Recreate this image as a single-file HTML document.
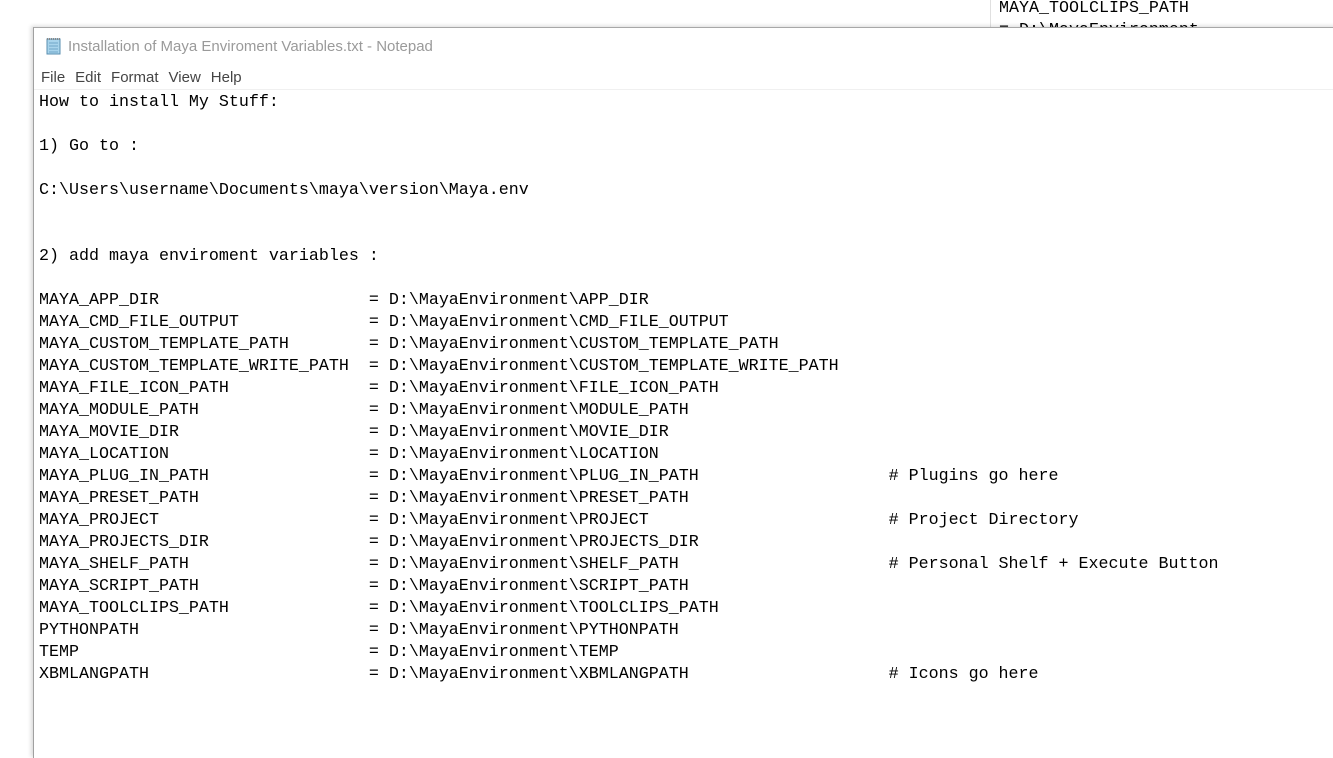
<!DOCTYPE html>
<html><head><style>
body{margin:0;width:1333px;height:743px;overflow:hidden;background:#fff;position:relative;font-family:"Liberation Sans",sans-serif}
.bgtxt{position:absolute;left:999px;top:-2px;font:16.67px/22px "Liberation Mono",monospace;color:#000;white-space:pre}
.bgline{position:absolute;left:990px;top:0;width:1px;height:27px;background:#e0e0e0}
.win{position:absolute;left:33px;top:27px;width:1310px;height:730px;background:#fff;border-left:1px solid #a0a0a0;border-top:1px solid #a8a8a8;box-shadow:-2px -1px 4px rgba(0,0,0,0.15)}
.title{position:absolute;left:34px;top:10px;font-size:15px;color:#9a9a9a}
.icon{position:absolute;left:11px;top:9px;width:16px;height:18px}
.menu{position:absolute;left:7px;top:41px;font-size:15px;color:#444}
.menu span{margin-right:10px}
.sep{position:absolute;left:0;right:0;top:61px;height:1px;background:#f0f0f0}
pre{position:absolute;left:5px;top:64px;margin:0;font:16.67px/22px "Liberation Mono",monospace;color:#000}
</style></head><body>
<div class="bgline"></div>
<div class="bgtxt">MAYA_TOOLCLIPS_PATH
= D:\MayaEnvironment</div>
<div class="win">
<svg class="icon" viewBox="0 0 16 18"><rect x="2" y="2" width="13" height="15" fill="#a8d4ec" stroke="#5a8fb0"/><path d="M4 6h9M4 9h9M4 12h9M4 15h9" stroke="#6fa6c8"/><path d="M2 2h13" stroke="#888" stroke-width="2" stroke-dasharray="1 1"/></svg>
<div class="title">Installation of Maya Enviroment Variables.txt - Notepad</div>
<div class="menu"><span>File</span><span>Edit</span><span>Format</span><span>View</span><span>Help</span></div>
<div class="sep"></div>
<pre>How to install My Stuff:

1) Go to :

C:\Users\username\Documents\maya\version\Maya.env


2) add maya enviroment variables :

MAYA_APP_DIR                     = D:\MayaEnvironment\APP_DIR
MAYA_CMD_FILE_OUTPUT             = D:\MayaEnvironment\CMD_FILE_OUTPUT
MAYA_CUSTOM_TEMPLATE_PATH        = D:\MayaEnvironment\CUSTOM_TEMPLATE_PATH
MAYA_CUSTOM_TEMPLATE_WRITE_PATH  = D:\MayaEnvironment\CUSTOM_TEMPLATE_WRITE_PATH
MAYA_FILE_ICON_PATH              = D:\MayaEnvironment\FILE_ICON_PATH
MAYA_MODULE_PATH                 = D:\MayaEnvironment\MODULE_PATH
MAYA_MOVIE_DIR                   = D:\MayaEnvironment\MOVIE_DIR
MAYA_LOCATION                    = D:\MayaEnvironment\LOCATION
MAYA_PLUG_IN_PATH                = D:\MayaEnvironment\PLUG_IN_PATH                   # Plugins go here
MAYA_PRESET_PATH                 = D:\MayaEnvironment\PRESET_PATH
MAYA_PROJECT                     = D:\MayaEnvironment\PROJECT                        # Project Directory
MAYA_PROJECTS_DIR                = D:\MayaEnvironment\PROJECTS_DIR
MAYA_SHELF_PATH                  = D:\MayaEnvironment\SHELF_PATH                     # Personal Shelf + Execute Button
MAYA_SCRIPT_PATH                 = D:\MayaEnvironment\SCRIPT_PATH
MAYA_TOOLCLIPS_PATH              = D:\MayaEnvironment\TOOLCLIPS_PATH
PYTHONPATH                       = D:\MayaEnvironment\PYTHONPATH
TEMP                             = D:\MayaEnvironment\TEMP
XBMLANGPATH                      = D:\MayaEnvironment\XBMLANGPATH                    # Icons go here</pre>
</div>
</body></html>
